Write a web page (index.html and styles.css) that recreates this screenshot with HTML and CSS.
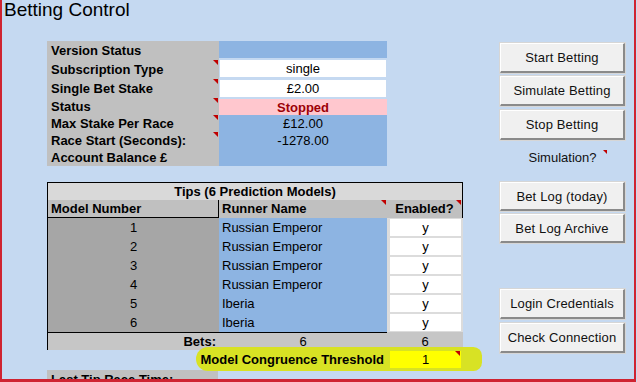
FILE: index.html
```html
<!DOCTYPE html>
<html lang="en">
<head>
    <meta charset="UTF-8">
    <meta name="viewport" content="width=device-width, initial-scale=1.0">
    <title>Betting Control</title>
    <link rel="stylesheet" href="styles.css">
</head>
<body>

    <div class="sheet">
        <h1 class="title">Betting Control</h1>

        <div class="main">
            <div class="left">

                <!-- settings block -->
                <div class="info">
                    <div class="label">Version Status</div>
                    <div class="value blue first"></div>

                    <div class="label note">Subscription Type</div>
                    <div class="value white row2">single</div>

                    <div class="label note">Single Bet Stake</div>
                    <div class="value white row3">£2.00</div>

                    <div class="label note">Status</div>
                    <div class="value bad">Stopped</div>

                    <div class="label note">Max Stake Per Race</div>
                    <div class="value blue">£12.00</div>

                    <div class="label note">Race Start (Seconds):</div>
                    <div class="value blue">-1278.00</div>

                    <div class="label">Account Balance £</div>
                    <div class="value blue"></div>
                </div>

                <!-- tips table -->
                <div class="tips">
                    <div class="tips-title">Tips (6 Prediction Models)</div>

                    <div class="th th-model">Model Number</div>
                    <div class="th th-runner note">Runner Name</div>
                    <div class="th th-enabled note">Enabled?</div>

                    <div class="num">1</div><div class="runner">Russian Emperor</div><div class="enabled"><span>y</span></div>
                    <div class="num">2</div><div class="runner">Russian Emperor</div><div class="enabled"><span>y</span></div>
                    <div class="num">3</div><div class="runner">Russian Emperor</div><div class="enabled"><span>y</span></div>
                    <div class="num">4</div><div class="runner">Russian Emperor</div><div class="enabled"><span>y</span></div>
                    <div class="num">5</div><div class="runner">Iberia</div><div class="enabled"><span>y</span></div>
                    <div class="num">6</div><div class="runner">Iberia</div><div class="enabled"><span>y</span></div>

                    <div class="bets bets-label">Bets:</div>
                    <div class="bets bets-count">6</div>
                    <div class="bets bets-enabled">6</div>
                </div>

                <div class="threshold">
                    <div class="threshold-label">Model Congruence Threshold</div>
                    <div class="threshold-value note">1</div>
                </div>

                <div class="last-tip">Last Tip Race Time:</div>
            </div>

            <div class="right">
                <button class="btn">Start Betting</button>
                <button class="btn gap3">Simulate Betting</button>
                <button class="btn gap4">Stop Betting</button>
                <div class="sim"><span class="sim-text">Simulation?</span></div>
                <button class="btn short log">Bet Log (today)</button>
                <button class="btn short gap3">Bet Log Archive</button>
                <button class="btn login">Login Credentials</button>
                <button class="btn gap4">Check Connection</button>
            </div>
        </div>
    </div>

</body>
</html>
```

FILE: styles.css
```css
body {
    margin: 0;
    background: #c5d9f1;
    font-family: "Liberation Sans", Arial, sans-serif;
    font-size: 13px;
    color: #000;
}

.sheet {
    width: 636px;
    height: 382px;
    box-sizing: border-box;
    border-left: 2px solid #cf2331;
    border-right: 2px solid #cf2331;
    border-bottom: 3px solid #cf2331;
    background: #c5d9f1;
    overflow: hidden;
}

.title {
    margin: 0;
    padding-left: 2px;
    height: 20px;
    font-size: 19px;
    line-height: 20px;
    font-weight: normal;
}

.main {
    display: flex;
    align-items: flex-start;
}

.left {
    margin-left: 45px;
    margin-top: 21px;
    width: 416px;
}

/* ---- settings block ---- */

.info {
    display: grid;
    grid-template-columns: 172px 168px;
    grid-template-rows: 19px 19px 19px 17px 17px 17px 17px;
}

.label {
    position: relative;
    background: #c0c0c0;
    font-weight: bold;
    padding-left: 4px;
    display: flex;
    align-items: center;
}

.note {
    position: relative;
}

.note::after {
    content: "";
    position: absolute;
    top: 0;
    right: 1px;
    border-top: 5px solid #c00000;
    border-left: 5px solid transparent;
}

.value {
    display: flex;
    align-items: center;
    justify-content: center;
}

.blue {
    background: #8db4e2;
}

.white {
    background: #fff;
}

.first {
    margin-bottom: 2px;
}

.row2 {
    margin: 0 1px 2px 1px;
}

.row3 {
    margin: 1px 1px 1px 1px;
}

.bad {
    background: #ffc7ce;
    color: #9c0006;
    font-weight: bold;
    margin-top: 1px;
}

/* ---- tips table ---- */

.tips {
    margin-top: 16px;
    display: grid;
    grid-template-columns: 171px 168px 76px;
    grid-template-rows: 17px 18px repeat(6, 19px) 18px;
    border-left: 1px solid #000;
    border-top: 1px solid #000;
}

.tips-title {
    grid-column: 1 / 4;
    background: #d9d9d9;
    font-weight: bold;
    text-align: center;
    line-height: 17px;
    border-right: 1px solid #000;
}

.th {
    background: #c0c0c0;
    font-weight: bold;
    line-height: 17px;
}

.th-model {
    padding-left: 3px;
    border-right: 1px solid #000;
    border-bottom: 1px solid #000;
}

.th-runner {
    padding-left: 3px;
}

.th-enabled {
    text-align: center;
    border-right: 1px solid #000;
}

.num {
    background: #a6a6a6;
    text-align: center;
    line-height: 19px;
}

.runner {
    background: #8db4e2;
    padding-left: 3px;
    line-height: 19px;
}

.enabled {
    background: #dcdcdc;
    display: flex;
}

.enabled span {
    flex: 1;
    margin: 1px 2px 1px 3px;
    background: #fff;
    text-align: center;
    line-height: 17px;
}

.bets {
    background: #c6c6c6;
    line-height: 17px;
}

.bets-label {
    font-weight: bold;
    text-align: right;
    padding-right: 3px;
    border-top: 1px solid #000;
}

.bets-count {
    text-align: center;
    border-top: 1px solid #000;
}

.bets-enabled {
    text-align: center;
    padding-top: 1px;
}

/* ---- threshold row ---- */

.threshold {
    position: relative;
    margin-left: 1px;
    height: 20px;
    display: grid;
    grid-template-columns: 339px 76px;
}

.threshold::before {
    content: "";
    position: absolute;
    left: 148px;
    top: -3px;
    width: 286px;
    height: 24px;
    border-radius: 14px 10px 10px 14px;
    background: #d8e224;
}

.threshold-label {
    position: relative;
    font-weight: bold;
    text-align: right;
    padding-right: 3px;
    line-height: 20px;
}

.threshold-value {
    margin: 1px 2px 2px 3px;
    background: #ffff00;
    text-align: center;
    line-height: 17px;
}

.last-tip {
    width: 167px;
    height: 20px;
    padding-left: 4px;
    background: #c0c0c0;
    font-weight: bold;
    line-height: 20px;
}

/* ---- buttons ---- */

.right {
    margin-left: 37px;
    margin-top: 23px;
    width: 125px;
    display: flex;
    flex-direction: column;
}

.btn {
    height: 30px;
    box-sizing: border-box;
    padding: 0;
    background: #f0f0f0;
    border-top: 1px solid #fff;
    border-left: 1px solid #fff;
    border-right: 2px solid #8a8a8a;
    border-bottom: 2px solid #8a8a8a;
    box-shadow: 0 0 0 1px #d6d6d6;
    font-family: "Liberation Sans", Arial, sans-serif;
    font-size: 13px;
    letter-spacing: 0.15px;
    color: #111;
    cursor: pointer;
}

.short {
    height: 29px;
}

.gap3 {
    margin-top: 3px;
}

.gap4 {
    margin-top: 4px;
}

.log {
    margin-top: 14px;
}

.login {
    margin-top: 46px;
}

.sim {
    margin-top: 8px;
    height: 20px;
    line-height: 20px;
    text-align: center;
    color: #111;
}

.sim-text {
    position: relative;
}

.sim-text::after {
    content: "";
    position: absolute;
    top: 0;
    right: -11px;
    border-top: 4px solid #c00000;
    border-left: 4px solid transparent;
}
```
